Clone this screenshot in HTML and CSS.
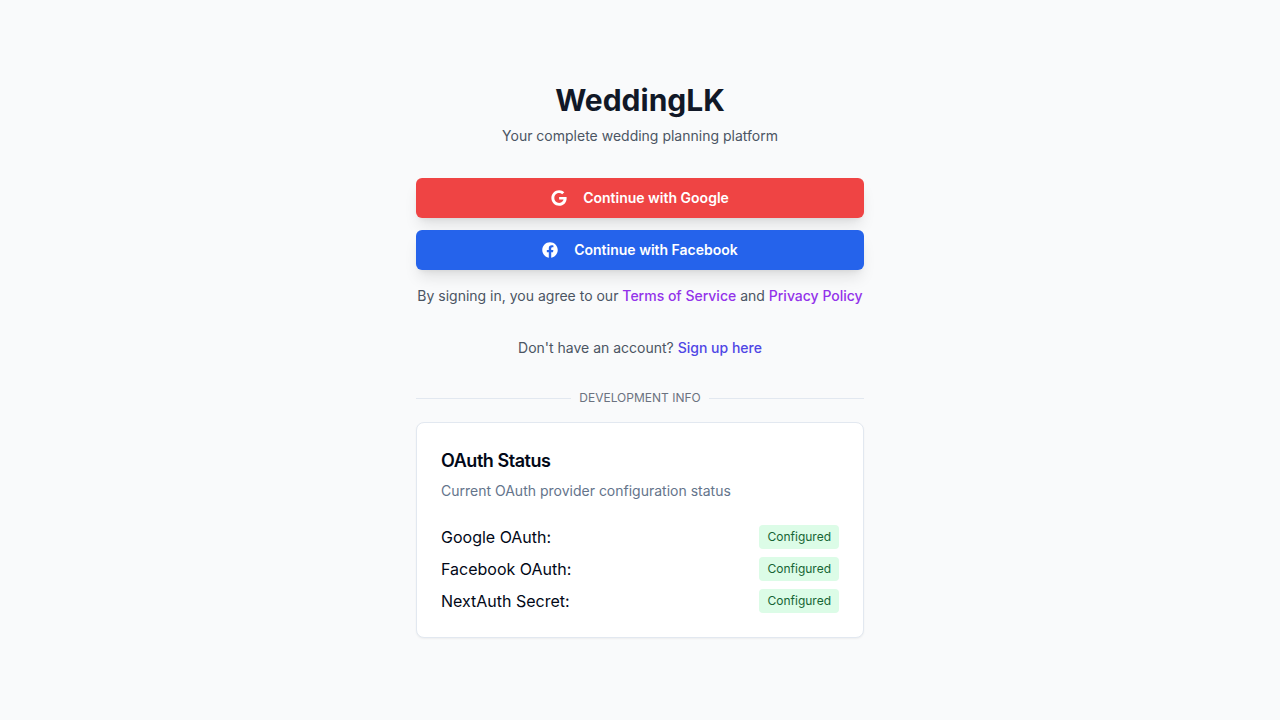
FILE: index.html
```html
<!DOCTYPE html>
<html lang="en">
<head>
<meta charset="utf-8">
<meta name="viewport" content="width=device-width, initial-scale=1">
<title>WeddingLK</title>
<link rel="stylesheet" href="styles.css">
</head>
<body>
<main class="page">
  <div class="panel">
    <header class="brand">
      <h1 class="brand-title">WeddingLK</h1>
      <p class="brand-tagline">Your complete wedding planning platform</p>
    </header>
    <div class="providers">
      <button class="btn btn-google" type="button">
        <svg class="icon" viewBox="0 0 488 512" aria-hidden="true"><path d="M488 261.8C488 403.3 391.1 504 248 504 110.8 504 0 393.2 0 256S110.8 8 248 8c66.8 0 123 24.5 166.3 64.9l-67.5 64.9C258.5 52.6 94.3 116.6 94.3 256c0 86.5 69.1 156.6 153.7 156.6 98.2 0 135-70.4 140.8-106.9H248v-85.3h236.1c2.3 12.7 3.9 24.9 3.9 41.4z"/></svg>
        Continue with Google
      </button>
      <button class="btn btn-facebook" type="button">
        <svg class="icon" viewBox="0 0 512 512" aria-hidden="true"><path d="M504 256C504 119 393 8 256 8S8 119 8 256c0 123.78 90.69 226.38 209.25 245V327.69h-63V256h63v-54.64c0-62.15 37-96.48 93.67-96.48 27.14 0 55.52 4.84 55.52 4.84v61h-31.28c-30.8 0-40.41 19.12-40.41 38.77V256h68.78l-11 71.69h-57.78V501C413.31 482.38 504 379.78 504 256z"/></svg>
        Continue with Facebook
      </button>
    </div>
    <p class="note terms">By signing in, you agree to our <a class="link" href="#">Terms of Service</a> and <a class="link" href="#">Privacy Policy</a></p>
    <p class="note signup">Don't have an account? <a class="link link-signup" href="#">Sign up here</a></p>
    <div class="divider">Development Info</div>
    <section class="card">
      <h2 class="card-title">OAuth Status</h2>
      <p class="card-description">Current OAuth provider configuration status</p>
      <dl class="status-list">
        <div class="status"><dt>Google OAuth:</dt><dd class="badge">Configured</dd></div>
        <div class="status"><dt>Facebook OAuth:</dt><dd class="badge">Configured</dd></div>
        <div class="status"><dt>NextAuth Secret:</dt><dd class="badge">Configured</dd></div>
      </dl>
    </section>
  </div>
</main>
</body>
</html>
```

FILE: styles.css
```css
*, *::before, *::after {
  box-sizing: border-box;
}

body, h1, h2, p, dl, dd {
  margin: 0;
}

body {
  background: #f9fafb;
  color: #020817;
  font-family: Inter, sans-serif;
  font-size: 16px;
  line-height: 24px;
}

.page {
  display: flex;
  align-items: center;
  justify-content: center;
  min-height: 100vh;
  padding: 48px 16px;
}

.panel {
  width: 100%;
  max-width: 448px;
}

.brand {
  text-align: center;
}

.brand-title {
  color: #111827;
  font-size: 30px;
  font-weight: 700;
  line-height: 36px;
}

.brand-tagline {
  margin-top: 8px;
  color: #4b5563;
  font-size: 14px;
  line-height: 20px;
}

.providers {
  display: grid;
  gap: 12px;
  margin-top: 32px;
}

.btn {
  display: flex;
  align-items: center;
  justify-content: center;
  gap: 16px;
  height: 40px;
  padding: 8px 16px;
  border: 0;
  border-radius: 6px;
  color: #fff;
  font: 600 14px/20px Inter, sans-serif;
  box-shadow: 0 10px 15px -3px rgb(0 0 0 / 0.1), 0 4px 6px -4px rgb(0 0 0 / 0.1);
  cursor: pointer;
}

.btn-google {
  background: #ef4444;
}

.btn-facebook {
  background: #2563eb;
}

.icon {
  width: 16px;
  height: 16px;
  fill: currentColor;
}

.note {
  color: #4b5563;
  font-size: 14px;
  line-height: 20px;
  text-align: center;
}

.terms {
  margin-top: 16px;
}

.signup {
  margin-top: 32px;
}

.link {
  color: #9333ea;
  font-weight: 500;
  text-decoration: none;
}

.link-signup {
  color: #4f46e5;
}

.divider {
  display: flex;
  align-items: center;
  gap: 8px;
  margin-top: 32px;
  color: #6b7280;
  font-size: 12px;
  line-height: 16px;
  text-transform: uppercase;
}

.divider::before,
.divider::after {
  content: "";
  flex: 1;
  height: 1px;
  background: #e2e8f0;
}

.card {
  margin-top: 16px;
  padding: 24px;
  border: 1px solid #e2e8f0;
  border-radius: 8px;
  background: #fff;
  box-shadow: 0 1px 2px 0 rgb(0 0 0 / 0.05);
}

.card-title {
  font-size: 18px;
  font-weight: 600;
  line-height: 28px;
  letter-spacing: -0.025em;
}

.card-description {
  margin-top: 6px;
  color: #64748b;
  font-size: 14px;
  line-height: 20px;
}

.status-list {
  display: grid;
  gap: 8px;
  margin-top: 24px;
}

.status {
  display: flex;
  align-items: center;
  justify-content: space-between;
}

.badge {
  padding: 4px 8px;
  border-radius: 4px;
  background: #dcfce7;
  color: #166534;
  font-size: 12px;
  line-height: 16px;
}
```
